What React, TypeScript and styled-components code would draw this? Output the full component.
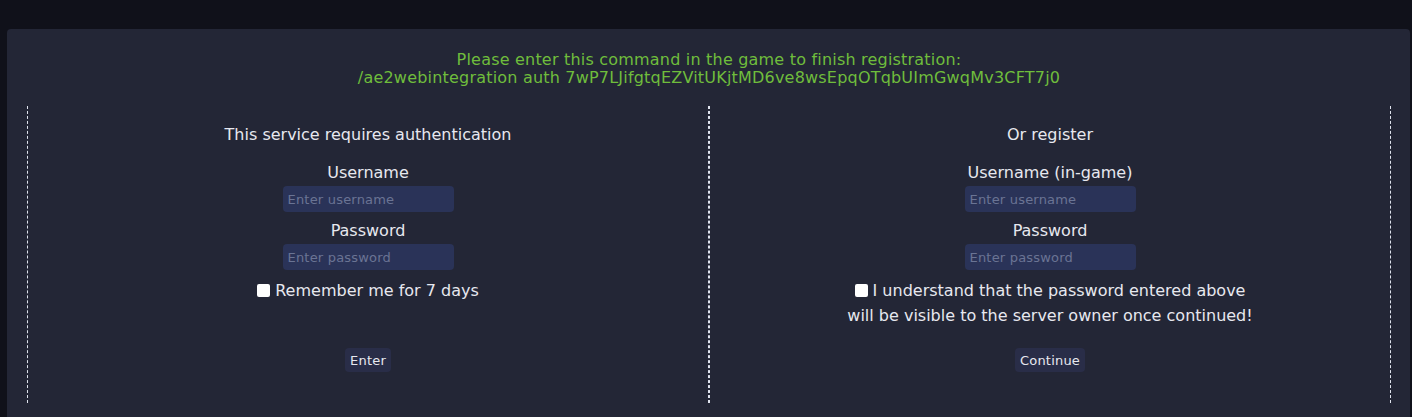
import React from "react";
import styled, { createGlobalStyle } from "styled-components";

const Global = createGlobalStyle`
  html, body { margin: 0; padding: 0; background: #10111a; }
  body { font-family: "DejaVu Sans", "Open Sans", sans-serif; }
  * { box-sizing: border-box; }
`;

const Page = styled.div`
  padding: 29px 2px 0 7px;
  min-height: 417px;
`;

const Panel = styled.div`
  background: #232636;
  border-radius: 4px 4px 0 0;
  padding: 22px 19px 20px 20px;
  min-height: 388px;
`;

const Notice = styled.div`
  color: #6fbd3c;
  text-align: center;
  font-size: 16px;
  line-height: 18px;
  letter-spacing: 0.2px;
`;

const Columns = styled.div`
  display: grid;
  grid-template-columns: 1fr 1fr;
  margin-top: 19px;
`;

const Column = styled.div`
  border-left: 1px dashed #dfe3ee;
  border-right: 1px dashed #dfe3ee;
  display: flex;
  flex-direction: column;
  align-items: center;
  padding: 18px 0 31px;
  color: #e7e8ef;
`;

const Heading = styled.div`
  font-size: 16px;
  font-weight: 500;
  line-height: 22px;
  margin-bottom: 17px;
`;

const Label = styled.div<{ $gap?: number }>`
  font-size: 16px;
  line-height: 20px;
  margin-top: ${(p) => p.$gap ?? 0}px;
  margin-bottom: 3px;
`;

const Input = styled.input`
  width: 171px;
  height: 26px;
  border: none;
  outline: none;
  border-radius: 4px;
  background: #2a3358;
  color: #e7e8ef;
  padding: 0 5px;
  font-family: inherit;
  font-size: 13px;
  letter-spacing: 0.2px;
  &::placeholder { color: #6a7494; }
`;

const CheckArea = styled.div`
  margin-top: 8px;
  min-height: 50px;
  text-align: center;
  font-size: 16px;
  line-height: 25px;
`;

const Check = styled.input`
  appearance: none;
  width: 13px;
  height: 13px;
  background: #ffffff;
  border-radius: 2px;
  margin: 0 5px 0 0;
  vertical-align: -1px;
`;

const Button = styled.button`
  margin-top: 20px;
  height: 24px;
  padding: 0 5px;
  border: none;
  border-radius: 4px;
  background: #292d48;
  color: #e7e8ef;
  font-family: inherit;
  font-size: 13px;
  letter-spacing: 0.2px;
`;

export default function App() {
  return (
    <>
      <Global />
      <Page>
        <Panel>
          <Notice>
            Please enter this command in the game to finish registration:
            <br />
            /ae2webintegration auth 7wP7LJifgtqEZVitUKjtMD6ve8wsEpqOTqbUImGwqMv3CFT7j0
          </Notice>
          <Columns>
            <Column>
              <Heading>This service requires authentication</Heading>
              <Label>Username</Label>
              <Input placeholder="Enter username" />
              <Label $gap={9}>Password</Label>
              <Input type="password" placeholder="Enter password" />
              <CheckArea>
                <Check type="checkbox" />
                Remember me for 7 days
              </CheckArea>
              <Button>Enter</Button>
            </Column>
            <Column>
              <Heading>Or register</Heading>
              <Label>Username (in-game)</Label>
              <Input placeholder="Enter username" />
              <Label $gap={9}>Password</Label>
              <Input type="password" placeholder="Enter password" />
              <CheckArea>
                <Check type="checkbox" />
                I understand that the password entered above
                <br />
                will be visible to the server owner once continued!
              </CheckArea>
              <Button>Continue</Button>
            </Column>
          </Columns>
        </Panel>
      </Page>
    </>
  );
}
